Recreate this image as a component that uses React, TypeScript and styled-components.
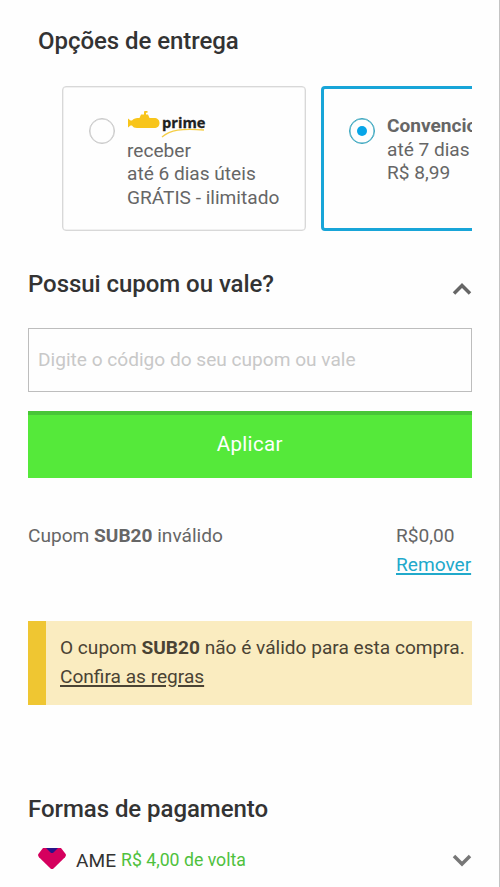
import React from "react";
import styled, { createGlobalStyle } from "styled-components";

const GlobalStyle = createGlobalStyle`
  * { box-sizing: border-box; }
  body { margin: 0; background: #fefefe; font-family: Roboto, "Liberation Sans", sans-serif; }
`;

const Page = styled.main`
  height: 887px;
  overflow: hidden;
  padding: 0 27.5px 0 28px;
  border-right: 1px solid #c4c4c4;
  color: #666;
  font-size: 19.1px;
`;

const Heading = styled.h2<{ $indent?: number }>`
  margin: 0;
  padding-left: ${(p) => p.$indent ?? 0}px;
  font-size: 24px;
  line-height: 30px;
  font-weight: 500;
  letter-spacing: -0.05px;
  color: #333;
`;

const Delivery = styled.section`
  height: 231px;
  padding-top: 26px;
`;

const Options = styled.div`
  display: flex;
  gap: 15px;
  margin-top: 30px;
  padding-left: 34px;
  overflow: hidden;
`;

const Option = styled.label<{ $selected?: boolean }>`
  display: flex;
  flex: 0 0 244px;
  height: 144.5px;
  gap: 12px;
  padding: ${(p) => (p.$selected ? "25px 0 0 25px" : "23px 0 0 26px")};
  border: ${(p) => (p.$selected ? "3px solid #18a5d8" : "1px solid #d8d8d8")};
  border-radius: 4px;
  box-shadow: ${(p) => (p.$selected ? "none" : "inset 0 0 0 0.5px #e2e2e2")};
`;

const Radio = styled.span<{ $selected?: boolean }>`
  display: flex;
  align-items: center;
  justify-content: center;
  flex: none;
  width: 26px;
  height: 26px;
  margin-top: ${(p) => (p.$selected ? 4 : 8)}px;
  border: 1px solid ${(p) => (p.$selected ? "#35a4bd" : "#c8c8c8")};
  box-shadow: inset 0 0 0 0.5px ${(p) => (p.$selected ? "#35a4bd" : "#ccc")};
  border-radius: 50%;
`;

const Dot = styled.span`
  width: 10px;
  height: 10px;
  border-radius: 50%;
  background: #07a5e8;
`;

const OptionText = styled.div`
  line-height: 23.5px;
  white-space: nowrap;
`;

const Prime = styled.svg`
  display: block;
  width: 80px;
  height: 28.5px;
`;

const Coupon = styled.section`
  height: 390px;
  padding-top: 38px;
`;

const Bar = styled.div`
  display: flex;
  justify-content: space-between;
  align-items: flex-start;
`;

const Chevron = styled.svg<{ $top: number }>`
  width: 20px;
  height: 14px;
  margin-top: ${(p) => p.$top}px;
  fill: none;
  stroke-width: 3.5;
`;

const Field = styled.input`
  display: block;
  width: 100%;
  height: 63.5px;
  margin-top: 29px;
  padding: 0 9px 1px;
  border: 1px solid #bdbdbd;
  border-radius: 0;
  background: transparent;
  font: 19.1px Roboto, sans-serif;
  &::placeholder { color: #c8c8c8; opacity: 1; }
`;

const Apply = styled.button`
  display: block;
  width: 100%;
  height: 67px;
  margin-top: 19.5px;
  padding: 0 0 5px;
  border: 0;
  border-top: 4px solid #48c637;
  background: #55e93a;
  color: #fff;
  font: 20.5px Roboto, sans-serif;
  letter-spacing: 0.35px;
`;

const Status = styled.div`
  display: flex;
  justify-content: space-between;
  margin-top: 44px;
  line-height: 28.5px;
`;

const Amount = styled.div`
  width: 75.5px;
  white-space: nowrap;
`;

const Link = styled.a<{ $color: string }>`
  display: block;
  color: ${(p) => p.$color};
  text-decoration: underline;
  text-decoration-thickness: 1.5px;
  text-underline-offset: 2px;
`;

const Alert = styled.aside`
  height: 84px;
  padding: 13px 0 0 14px;
  border-left: 18px solid #efc632;
  background: #faecc0;
  color: #4a4334;
  line-height: 28.5px;
  white-space: nowrap;
`;

const Payment = styled.section`
  padding-top: 89px;
`;

const Method = styled.div`
  display: flex;
  align-items: center;
  height: 28px;
  margin-top: 22px;
  padding-left: 10px;
`;

const Gem = styled.svg`
  width: 28px;
  height: 21px;
  margin: -3px 10px 0 0;
`;

const Brand = styled.span`
  color: #333;
`;

const Cashback = styled.span`
  margin: 0 auto 0 5px;
  color: #4fc13d;
  font-size: 17.7px;
`;

const PrimeLogo = () => (
  <Prime viewBox="0 0 80 28.5" role="img" aria-label="prime">
    <path fill="#f8c51b" d="M1 8.5 3.5 10.5H5C6.5 8.5 9 8 12.5 8L14 4.5h3V2q0-1 1-1h2.5v1.8h-1.5v1.7H21L22.5 8H27c3.5 0 5.5 2 5.5 5s-2 5-5.5 5H10c-2.5 0-4-.8-5-2.5H3.5L1 17.5Z" />
    <path fill="none" stroke="#f5ce47" strokeWidth="1.3" d="M35 27C43 20 55 18 77 20" />
    <text x="35" y="18" fill="#202020" fontFamily="Open Sans, sans-serif" fontWeight="700" fontSize="15" textLength="43.5" lengthAdjust="spacingAndGlyphs" stroke="#202020" strokeWidth="0.3">prime</text>
  </Prime>
);

export default function App() {
  return (
    <>
      <GlobalStyle />
      <Page>
        <Delivery>
          <Heading $indent={10}>Opções de entrega</Heading>
          <Options>
            <Option>
              <Radio />
              <OptionText>
                <PrimeLogo />
                receber<br />até 6 dias úteis<br />GRÁTIS - ilimitado
              </OptionText>
            </Option>
            <Option $selected>
              <Radio $selected><Dot /></Radio>
              <OptionText><b>Convencional</b><br />até 7 dias<br />R$ 8,99</OptionText>
            </Option>
          </Options>
        </Delivery>
        <Coupon>
          <Bar>
            <Heading>Possui cupom ou vale?</Heading>
            <Chevron $top={13} viewBox="0 0 20 14" stroke="#666"><path d="m2 11.5 8-8 8 8" /></Chevron>
          </Bar>
          <Field placeholder="Digite o código do seu cupom ou vale" />
          <Apply>Aplicar</Apply>
          <Status>
            <div>Cupom <b>SUB20</b> inválido</div>
            <Amount>R$0,00<Link $color="#21a9cb">Remover</Link></Amount>
          </Status>
        </Coupon>
        <Alert>
          O cupom <b>SUB20</b> não é válido para esta compra.
          <Link $color="#4a4334">Confira as regras</Link>
        </Alert>
        <Payment>
          <Heading>Formas de pagamento</Heading>
          <Method>
            <Gem viewBox="0 0 28 21">
              <path fill="#d5005e" d="M5 0h18l5 6.5c0 1-.3 2-1 2.8L15.5 20.5q-1.5 1-3 0L1 9.3Q0 8 0 6.5Z" />
              <path fill="#28148a" d="M8 0h12l-4.5 4.5q-1.5 1-3 0Z" />
            </Gem>
            <Brand>AME</Brand>
            <Cashback>R$ 4,00 de volta</Cashback>
            <Chevron $top={0} viewBox="0 0 20 14" stroke="#777"><path d="m2 3 8 8 8-8" /></Chevron>
          </Method>
        </Payment>
      </Page>
    </>
  );
}
